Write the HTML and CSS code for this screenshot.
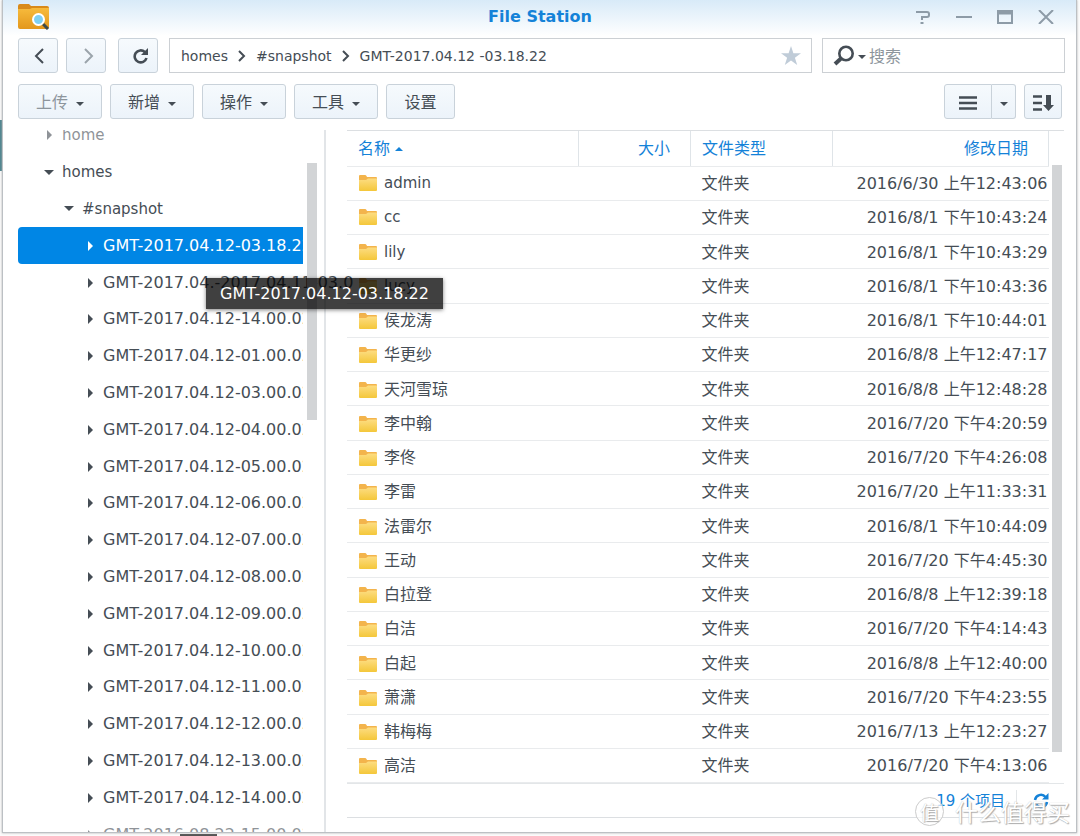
FILE: index.html
```html
<!DOCTYPE html>
<html lang="zh-CN">
<head>
<meta charset="utf-8">
<title>File Station</title>
<link rel="stylesheet" href="styles.css">
</head>
<body>
<svg class="defs" aria-hidden="true">
  <defs>
    <linearGradient id="fold" x1="0" y1="0" x2="0" y2="1"><stop offset="0" stop-color="#fddd82"/><stop offset="1" stop-color="#f4c73a"/></linearGradient>
    <linearGradient id="app" x1="0" y1="0" x2="0" y2="1"><stop offset="0" stop-color="#f7bb3c"/><stop offset="1" stop-color="#e3971c"/></linearGradient>
  </defs>
  <symbol id="folder" viewBox="0 0 20 18">
    <path d="M1 2q0-1 1-1h5q1 0 1.500 1l.5 1h9q1 0 1 1v5H1z" fill="#f3b44c"/>
    <path d="M1 6h7l2-1.500h9V16q0 1-1 1H2q-1 0-1-1z" fill="url(#fold)"/>
  </symbol>
</svg>
<div class="window">
  <header class="titlebar">
    <svg class="app-icon" viewBox="0 0 32 26" width="32" height="26">
      <path d="M0 2q0-2 2-2h9l2 2h16q2 0 2 2v5H0z" fill="#d98a1a"/>
      <path d="M0 5h12l2-1h17v19q0 2-2 2H2q-2 0-2-2z" fill="url(#app)"/>
      <path d="M25 20l5 5" stroke="#3d4a4b" stroke-width="3"/>
      <circle cx="20.500" cy="15.500" r="5.500" fill="#7fd0f2" stroke="#fff" stroke-width="2"/>
    </svg>
    <h1 class="title">File Station</h1>
    <div class="win-controls">
      <button aria-label="帮助"><svg viewBox="0 0 16 14" width="16" height="14"><path d="M1 2h11q2 0 2 2v1q0 2-2 2H7v3M5.500 13h3" fill="none" stroke="#8d9ba7" stroke-width="2"/></svg></button>
      <button aria-label="最小化"><svg viewBox="0 0 16 14" width="16" height="14"><path d="M0 7h16" stroke="#8d9ba7" stroke-width="2"/></svg></button>
      <button aria-label="最大化"><svg viewBox="0 0 16 14" width="16" height="14"><path d="M1 1h14v12H1z" fill="none" stroke="#8d9ba7" stroke-width="2"/><path d="M1 3h14" stroke="#8d9ba7" stroke-width="3"/></svg></button>
      <button aria-label="关闭"><svg viewBox="0 0 16 14" width="16" height="14"><path d="M1 0l14 14M15 0L1 14" stroke="#8d9ba7" stroke-width="2"/></svg></button>
    </div>
  </header>

  <div class="nav-row">
    <button class="btn square" aria-label="后退"><svg viewBox="0 0 16 16" width="16" height="16"><path d="M13 1L6 8l7 7" fill="none" stroke="#454d55" stroke-width="2"/></svg></button>
    <button class="btn square" aria-label="前进"><svg viewBox="0 0 16 16" width="16" height="16"><path d="M7 1l7 7-7 7" fill="none" stroke="#9ba4ab" stroke-width="2"/></svg></button>
    <button class="btn square reload" aria-label="刷新"><svg viewBox="0 0 18 16" width="18" height="16"><path d="M13.800 4A6 6 0 1 0 15.500 10" fill="none" stroke="#454d55" stroke-width="2.600"/><path d="M17 0v7h-7z" fill="#454d55"/></svg></button>
    <nav class="path" aria-label="路径">
      <a href="#">homes</a>
      <svg viewBox="0 0 8 12" width="8" height="12"><path d="M1 1l5 5-5 5" fill="none" stroke="#454d55" stroke-width="2"/></svg>
      <a href="#">#snapshot</a>
      <svg viewBox="0 0 8 12" width="8" height="12"><path d="M1 1l5 5-5 5" fill="none" stroke="#454d55" stroke-width="2"/></svg>
      <a href="#">GMT-2017.04.12 -03.18.22</a>
      <button class="star" aria-label="收藏"><svg viewBox="0 0 20 20" width="20" height="20"><path d="M10 0l2.400 7.200H20l-6.100 4.600L16.200 19 10 14.600 3.800 19l2.300-7.200L0 7.200h7.600z" fill="#c0ccd8"/></svg></button>
    </nav>
    <label class="search">
      <svg viewBox="0 0 22 22" width="22" height="22"><circle cx="13" cy="8.500" r="6.700" fill="none" stroke="#454d55" stroke-width="2.600"/><path d="M8 13.500L2 19" stroke="#454d55" stroke-width="4"/></svg>
      <i class="caret"></i>
      <input type="text" placeholder="搜索" aria-label="搜索">
    </label>
  </div>

  <div class="toolbar">
    <button class="btn menu off">上传<i class="caret"></i></button>
    <button class="btn menu">新增<i class="caret"></i></button>
    <button class="btn menu">操作<i class="caret"></i></button>
    <button class="btn menu">工具<i class="caret"></i></button>
    <button class="btn plain">设置</button>
    <div class="split">
      <button class="btn view" aria-label="列表视图"><svg viewBox="0 0 18 14" width="18" height="14"><path d="M0 1.500h18M0 7h18M0 12.500h18" stroke="#454d55" stroke-width="2.600"/></svg></button>
      <button class="btn more" aria-label="更多视图"><i class="caret"></i></button>
    </div>
    <button class="btn sort" aria-label="排序"><svg viewBox="0 0 22 18" width="22" height="18"><path d="M1 2.500h9M1 9h9M1 15.500h9" stroke="#454d55" stroke-width="2.600"/><path d="M14 1h5v10h3l-5.500 6L11 11h3z" fill="#454d55"/></svg></button>
  </div>

  <main class="content">
    <aside class="side">
      <ul class="tree">
        <li class="l1"><button><i class="tri"></i><span>home</span></button></li>
        <li class="l1"><button><i class="tri open"></i><span>homes</span></button></li>
        <li class="l2"><button><i class="tri open"></i><span>#snapshot</span></button></li>
        <li class="l3 selected"><button><i class="tri"></i><span>GMT-2017.04.12-03.18.22</span></button></li>
        <li class="l3 spill"><button><i class="tri"></i><span>GMT-2017.04.-2017.04.11-03.0</span></button></li>
        <li class="l3"><button><i class="tri"></i><span>GMT-2017.04.12-14.00.02</span></button></li>
        <li class="l3"><button><i class="tri"></i><span>GMT-2017.04.12-01.00.02</span></button></li>
        <li class="l3"><button><i class="tri"></i><span>GMT-2017.04.12-03.00.02</span></button></li>
        <li class="l3"><button><i class="tri"></i><span>GMT-2017.04.12-04.00.02</span></button></li>
        <li class="l3"><button><i class="tri"></i><span>GMT-2017.04.12-05.00.02</span></button></li>
        <li class="l3"><button><i class="tri"></i><span>GMT-2017.04.12-06.00.02</span></button></li>
        <li class="l3"><button><i class="tri"></i><span>GMT-2017.04.12-07.00.02</span></button></li>
        <li class="l3"><button><i class="tri"></i><span>GMT-2017.04.12-08.00.02</span></button></li>
        <li class="l3"><button><i class="tri"></i><span>GMT-2017.04.12-09.00.02</span></button></li>
        <li class="l3"><button><i class="tri"></i><span>GMT-2017.04.12-10.00.02</span></button></li>
        <li class="l3"><button><i class="tri"></i><span>GMT-2017.04.12-11.00.02</span></button></li>
        <li class="l3"><button><i class="tri"></i><span>GMT-2017.04.12-12.00.02</span></button></li>
        <li class="l3"><button><i class="tri"></i><span>GMT-2017.04.12-13.00.02</span></button></li>
        <li class="l3"><button><i class="tri"></i><span>GMT-2017.04.12-14.00.02</span></button></li>
        <li class="l3 faded"><button><i class="tri"></i><span>GMT-2016.08.22-15.00.02</span></button></li>
      </ul>
      <div class="side-scroll"><div class="thumb"></div></div>
      <div class="tooltip" role="tooltip">GMT-2017.04.12-03.18.22</div>
    </aside>

    <section class="list">
      <div class="grid">
        <table class="files">
          <colgroup><col><col class="c-size"><col class="c-type"><col class="c-date"></colgroup>
          <thead><tr><th>名称<i class="asc"></i></th><th class="size">大小</th><th>文件类型</th><th class="mod">修改日期</th></tr></thead>
          <tbody>
            <tr><td class="name latin"><svg><use href="#folder"/></svg>admin</td><td></td><td>文件夹</td><td class="date">2016/6/30 上午12:43:06</td></tr>
            <tr><td class="name latin"><svg><use href="#folder"/></svg>cc</td><td></td><td>文件夹</td><td class="date">2016/8/1 下午10:43:24</td></tr>
            <tr><td class="name latin"><svg><use href="#folder"/></svg>lily</td><td></td><td>文件夹</td><td class="date">2016/8/1 下午10:43:29</td></tr>
            <tr><td class="name latin"><svg><use href="#folder"/></svg>lucy</td><td></td><td>文件夹</td><td class="date">2016/8/1 下午10:43:36</td></tr>
            <tr><td class="name"><svg><use href="#folder"/></svg>侯龙涛</td><td></td><td>文件夹</td><td class="date">2016/8/1 下午10:44:01</td></tr>
            <tr><td class="name"><svg><use href="#folder"/></svg>华更纱</td><td></td><td>文件夹</td><td class="date">2016/8/8 上午12:47:17</td></tr>
            <tr><td class="name"><svg><use href="#folder"/></svg>天河雪琼</td><td></td><td>文件夹</td><td class="date">2016/8/8 上午12:48:28</td></tr>
            <tr><td class="name"><svg><use href="#folder"/></svg>李中翰</td><td></td><td>文件夹</td><td class="date">2016/7/20 下午4:20:59</td></tr>
            <tr><td class="name"><svg><use href="#folder"/></svg>李佟</td><td></td><td>文件夹</td><td class="date">2016/7/20 下午4:26:08</td></tr>
            <tr><td class="name"><svg><use href="#folder"/></svg>李雷</td><td></td><td>文件夹</td><td class="date">2016/7/20 上午11:33:31</td></tr>
            <tr><td class="name"><svg><use href="#folder"/></svg>法雷尔</td><td></td><td>文件夹</td><td class="date">2016/8/1 下午10:44:09</td></tr>
            <tr><td class="name"><svg><use href="#folder"/></svg>王动</td><td></td><td>文件夹</td><td class="date">2016/7/20 下午4:45:30</td></tr>
            <tr><td class="name"><svg><use href="#folder"/></svg>白拉登</td><td></td><td>文件夹</td><td class="date">2016/8/8 上午12:39:18</td></tr>
            <tr><td class="name"><svg><use href="#folder"/></svg>白洁</td><td></td><td>文件夹</td><td class="date">2016/7/20 下午4:14:43</td></tr>
            <tr><td class="name"><svg><use href="#folder"/></svg>白起</td><td></td><td>文件夹</td><td class="date">2016/8/8 上午12:40:00</td></tr>
            <tr><td class="name"><svg><use href="#folder"/></svg>萧潇</td><td></td><td>文件夹</td><td class="date">2016/7/20 下午4:23:55</td></tr>
            <tr><td class="name"><svg><use href="#folder"/></svg>韩梅梅</td><td></td><td>文件夹</td><td class="date">2016/7/13 上午12:23:27</td></tr>
            <tr><td class="name"><svg><use href="#folder"/></svg>高洁</td><td></td><td>文件夹</td><td class="date">2016/7/20 下午4:13:06</td></tr>
          </tbody>
        </table>
        <div class="list-scroll"><div class="thumb"></div></div>
      </div>
      <footer class="status">
        <span>19 个项目</span><i class="bar"></i>
        <button aria-label="重新载入"><svg viewBox="0 0 16 16" width="16" height="16"><path d="M2 7a6 6 0 0 1 10.500-3M14 9a6 6 0 0 1-10.500 3" fill="none" stroke="#1482d8" stroke-width="2.500"/><path d="M15.500 0v6.500H9zM.5 16V9.500H7z" fill="#1482d8"/></svg></button>
        <div class="watermark"><b>值</b><span>什么值得买</span></div>
      </footer>
    </section>
  </main>
</div>
</body>
</html>
```
FILE: styles.css
```css
* { box-sizing: border-box; }

body {
  margin: 0;
  height: 100vh;
  padding: 0 3px 3px 2px;
  overflow: hidden;
  background:
    linear-gradient(#4d8590, #4d8590) 0 120px / 2px 51px no-repeat,
    linear-gradient(#555, #555) 180px 100% / 37px 2px no-repeat,
    #fbfbfb;
  color: #454d55;
  font: 16px/20px "DejaVu Sans", "Noto Sans CJK SC", sans-serif;
}

button, input { font: inherit; color: inherit; }
button { border: 0; padding: 0; background: none; cursor: pointer; }
a { color: inherit; text-decoration: none; }
svg { flex: none; }
.defs { position: absolute; width: 0; height: 0; }

.window {
  height: 100%;
  display: flex;
  flex-direction: column;
  border: 1px solid #bcc0c4;
  border-width: 0 1px 1px;
  box-shadow: 0 0 2px #aaa;
  background: linear-gradient(#d8eaf8, #fff 36px);
}

.titlebar {
  display: grid;
  grid-template-columns: 1fr auto 1fr;
  align-items: center;
  height: 38px;
  padding: 0 22px 4px 15px;
}
.title { margin: 0; padding-left: 8px; font-size: 16px; line-height: 32px; color: #1482d8; }
.win-controls { display: flex; justify-content: flex-end; gap: 25px; }
.win-controls button { display: flex; }

.btn {
  display: flex;
  align-items: center;
  justify-content: center;
  height: 35px;
  border: 1px solid #c9d2da;
  border-radius: 3px;
  background: linear-gradient(#f6fafd, #ecf3fa);
}
.square { width: 40px; }
.reload { margin-left: 4px; padding-left: 4px; }

.nav-row { display: flex; gap: 8px; padding: 0 11px 0 15px; }
.path, .search {
  display: flex;
  align-items: center;
  height: 35px;
  border: 1px solid #ccd0d4;
  background: #fff;
}
.path { flex: 1; gap: 10px; margin-left: 3px; padding: 0 10px 0 11px; font-size: 14px; white-space: nowrap; }
.star { display: flex; margin-left: auto; }
.search { width: 243px; margin-left: 2px; padding-left: 10px; gap: 3px; }
.search input { flex: 1; min-width: 0; padding: 2px 0 0; border: 0; outline: 0; background: none; }
.search input::placeholder { color: #8d959c; opacity: 1; }

.caret { border: 4px solid transparent; border-top-color: #454d55; border-bottom-width: 0; margin-top: 2px; }

.toolbar { display: flex; gap: 8px; padding: 11px 14px 0 15px; }
.toolbar .btn { padding-top: 2px; }
.menu { width: 84px; gap: 8px; }
.off { color: #8d959c; }
.plain { width: 69px; }
.split { display: flex; margin-left: auto; }
.view { width: 48px; border-radius: 3px 0 0 3px; }
.more { width: 24px; border-left: 0; border-radius: 0 3px 3px 0; }
.sort { width: 38px; }

.content { flex: 1; min-height: 0; display: flex; padding-top: 11px; }

.side {
  position: relative;
  flex: none;
  width: 308px;
  margin-left: 15px;
  display: flex;
  border-right: 2px solid #e2e5e8;
  overflow-x: visible;
  overflow-y: clip;
}
.tree {
  display: grid;
  grid-auto-rows: 1fr;
  width: 285px;
  margin: -13px 0 -21px;
  padding: 0;
  list-style: none;
}
.tree li { display: flex; min-width: 0; overflow: hidden; }
.tree button { display: flex; align-items: center; white-space: nowrap; }
.tree .spill { overflow: visible; }
.l1 { padding-left: 25px; font-size: 15px; }
.l2 { padding-left: 45px; font-size: 15px; }
.l3 { padding-left: 66px; }
.tree button { gap: 7px; }
.tree .selected { background: #0086e5; color: #fff; border-radius: 4px 0 0 4px; }
.tree li:first-child, .faded { opacity: .6; }
.tri { width: 12px; display: flex; justify-content: center; }
.tri::before { content: ""; border: 5px solid transparent; border-left-color: currentColor; border-right-width: 0; }
.tri.open::before { border: 5px solid transparent; border-top-color: currentColor; border-bottom-width: 0; }

.side-scroll { width: 10px; margin-left: 4px; padding-top: 33px; }
.side-scroll .thumb { height: 257px; background: #d2d4d6; }

.tooltip {
  position: absolute;
  z-index: 2;
  left: 188px;
  top: 148px;
  padding: 5px 14px;
  line-height: 21px;
  white-space: nowrap;
  color: #fff;
  background: rgba(0, 0, 0, .75);
  box-shadow: 0 1px 4px rgba(0, 0, 0, .5);
}

.list { flex: 1; min-width: 0; display: flex; flex-direction: column; margin: 0 12px 14px 21px; }
.grid { flex: 1; min-height: 0; display: flex; border-top: 1px solid #dcdfe2; border-bottom: 1px solid #e3e6e8; }
.files { flex: 1; height: 100%; table-layout: fixed; border-collapse: collapse; }
.c-size { width: 112px; }
.c-type { width: 142px; }
.c-date { width: 216px; }
.files th, .files td { padding: 2px 0 0 11px; text-align: left; white-space: nowrap; border-bottom: 1px solid #e9ebed; }
.files th { height: 35px; font-weight: 400; color: #1482d8; border-right: 1px solid #dfe4e8; }
.files .size, .files .mod { text-align: right; padding-right: 20px; }
.files .date { text-align: right; padding-right: 1px; }
.name svg { width: 20px; height: 18px; margin-right: 6px; vertical-align: -4px; }
.files .latin { font-size: 15px; padding-top: 0; }
.asc { display: inline-block; margin-left: 5px; vertical-align: 3px; border: 4px solid transparent; border-bottom-color: #1482d8; border-top-width: 0; }
.list-scroll { width: 15px; padding: 34px 2px 0 3px; }
.list-scroll .thumb { height: 95%; background: #d2d4d6; }

.status {
  position: relative;
  display: flex;
  align-items: center;
  justify-content: flex-end;
  height: 34px;
  padding-right: 15px;
  border-bottom: 1px solid #dcdfe2;
  color: #1482d8;
  font-size: 15px;
}
.bar { width: 1px; height: 22px; margin: 0 16px 0 11px; background: #e3e6e8; }
.status button { display: flex; }
.watermark {
  position: absolute;
  right: -6px;
  top: 11px;
  display: flex;
  align-items: center;
  gap: 11px;
  color: #fff;
  font: 23px/32px "Noto Sans CJK SC", sans-serif;
  text-shadow: 1px 1px 1px #aaa, 0 0 1px #bbb;
  white-space: nowrap;
}
.watermark b { width: 29px; border: 1px solid #ccc; border-radius: 50%; font-size: 19px; line-height: 27px; font-weight: 400; text-align: center; background: rgba(255, 255, 255, .7); }
```
